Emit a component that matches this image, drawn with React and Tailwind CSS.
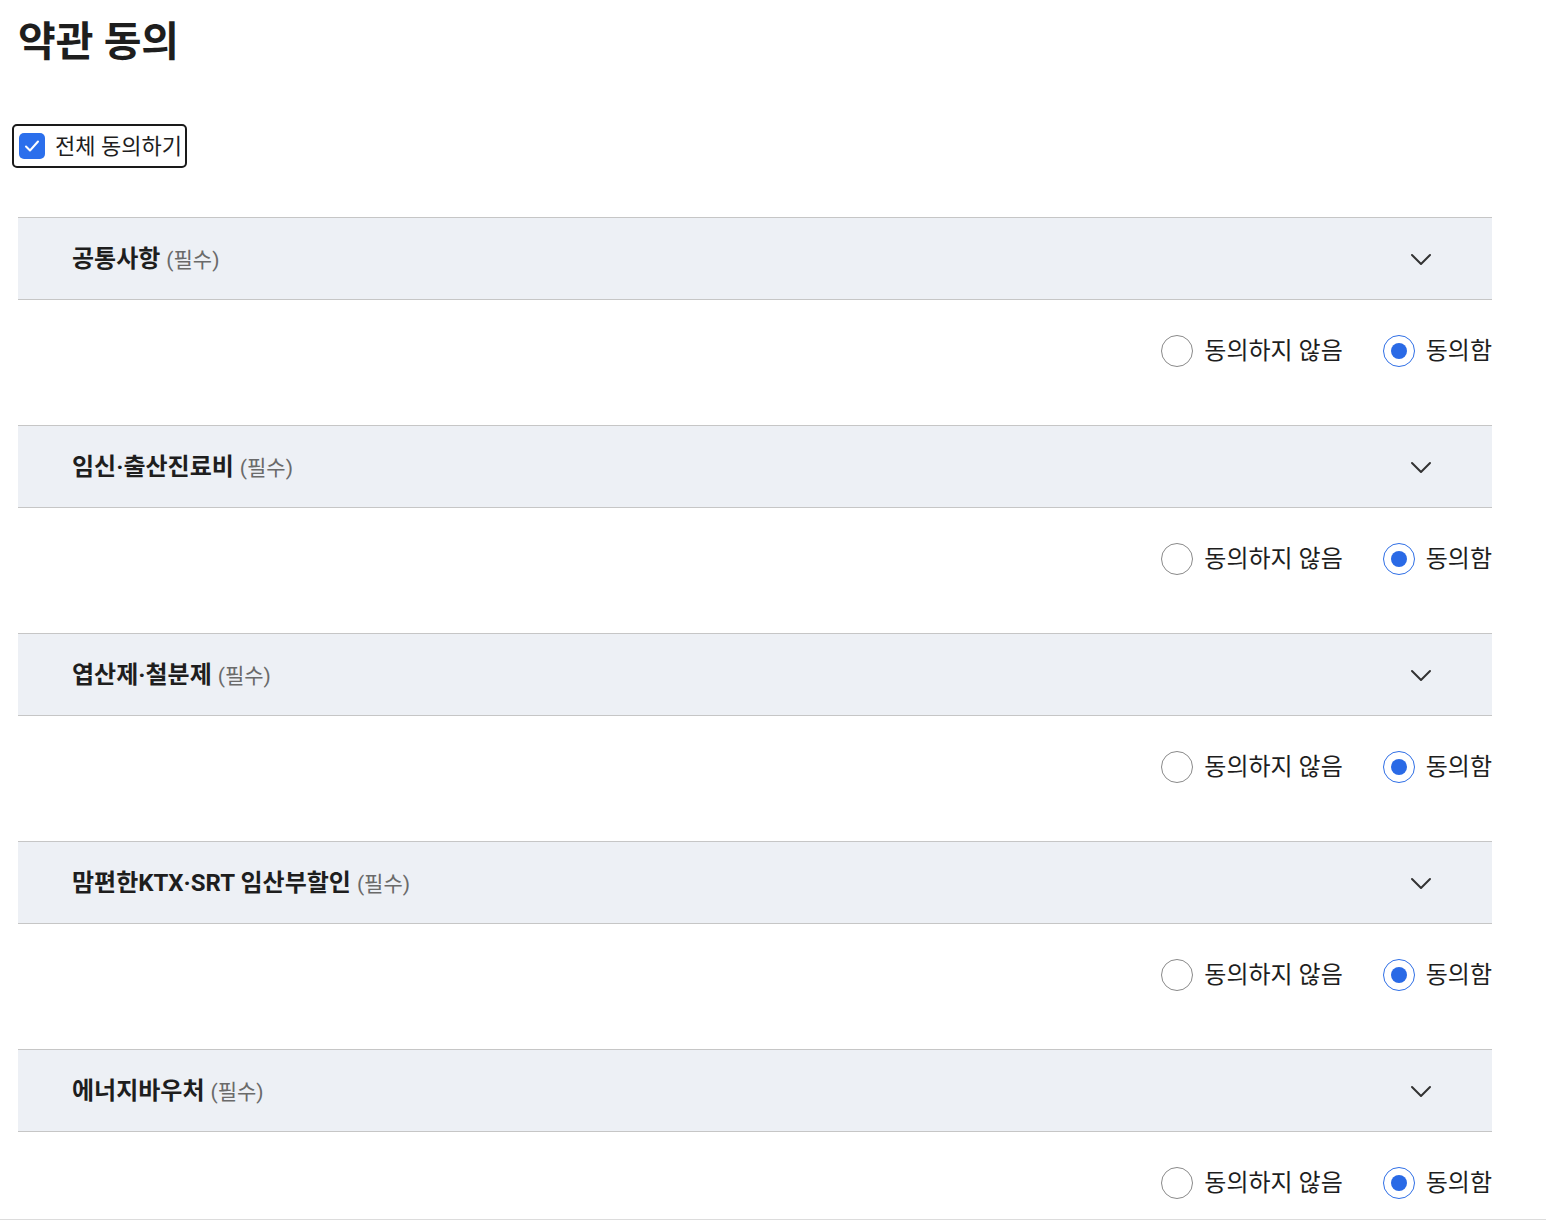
import React, { useState } from "react";

const FONT = "font-['Roboto','Noto_Sans_CJK_KR',sans-serif]";

const terms = [
  "공통사항",
  "임신·출산진료비",
  "엽산제·철분제",
  "맘편한KTX·SRT 임산부할인",
  "에너지바우처",
];

function Radio({ checked, label, onClick }) {
  return (
    <button type="button" onClick={onClick} className="flex items-center gap-[11px]">
      {checked ? (
        <span className="w-[32px] h-[32px] rounded-full border-[1.5px] border-[#2f6fe6] flex items-center justify-center">
          <span className="w-[16px] h-[16px] rounded-full bg-[#2a6ae6]" />
        </span>
      ) : (
        <span className="w-[32px] h-[32px] rounded-full border border-[#8a8a8a]" />
      )}
      <span className="text-[24px] leading-[32px] text-[#1e1e1e]">{label}</span>
    </button>
  );
}

function Section({ title, value, onChange }) {
  return (
    <div>
      <div className="h-[83px] bg-[#edf0f5] border-y border-[#c6c6c6] flex items-center justify-between pl-[54px] pr-[60px]">
        <div className="flex items-baseline gap-[6px]">
          <span className="text-[24px] font-bold text-[#1e1e1e]">{title}</span>
          <span className="text-[21px] text-[#6a6a6a]">(필수)</span>
        </div>
        <svg width="22" height="14" viewBox="0 0 22 14" fill="none">
          <path d="M2 3l9 9 9-9" stroke="#333" strokeWidth="2" strokeLinecap="round" strokeLinejoin="round" />
        </svg>
      </div>
      <div className="h-[125px] flex justify-end items-start pt-[35px] gap-[40px]">
        <Radio checked={value === "n"} label="동의하지 않음" onClick={() => onChange("n")} />
        <Radio checked={value === "y"} label="동의함" onClick={() => onChange("y")} />
      </div>
    </div>
  );
}

export default function App() {
  const [values, setValues] = useState(terms.map(() => "y"));
  const all = values.every((v) => v === "y");

  return (
    <div className={`${FONT} bg-white min-h-[1220px]`}>
      <div className="w-[1474px] ml-[18px]">
        <h1 className="pt-[13px] text-[41px] leading-[58px] font-bold text-[#1e1e1e]">약관 동의</h1>

        <button
          type="button"
          onClick={() => setValues(terms.map(() => (all ? "n" : "y")))}
          className="mt-[53px] ml-[-6px] h-[44px] pl-[5px] pr-[3px] border-2 border-[#1a1a1a] rounded-[5px] flex items-center gap-[10px]"
        >
          <span className={`w-[26px] h-[26px] rounded-[5px] flex items-center justify-center ${all ? "bg-[#2b6fec]" : "border border-[#777]"}`}>
            {all && (
              <svg width="16" height="14" viewBox="0 0 16 14" fill="none">
                <path d="M2 7.5l4 4 8-9" stroke="#fff" strokeWidth="2" strokeLinecap="round" strokeLinejoin="round" />
              </svg>
            )}
          </span>
          <span className="text-[22px] text-[#1e1e1e]">전체 동의하기</span>
        </button>

        <div className="mt-[49px]">
          {terms.map((t, i) => (
            <Section
              key={t}
              title={t}
              value={values[i]}
              onChange={(v) => setValues(values.map((x, j) => (j === i ? v : x)))}
            />
          ))}
        </div>
      </div>
      <div className="fixed left-0 right-0 bottom-0 h-[1px] bg-[#dcdcdc]" />
    </div>
  );
}
